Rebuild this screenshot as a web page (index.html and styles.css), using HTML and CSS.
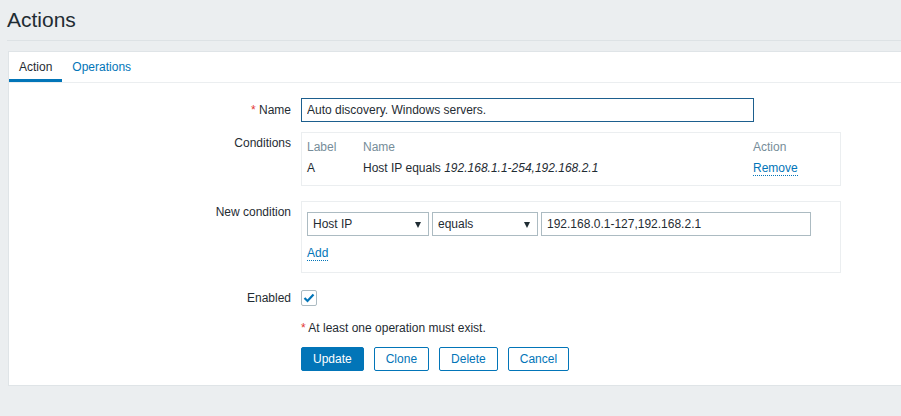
FILE: index.html
```html
<!DOCTYPE html>
<html>
<head>
<meta charset="utf-8">
<link rel="stylesheet" href="styles.css">
</head>
<body>
<header class="page-header"><h1>Actions</h1></header>
<div class="panel">
  <ul class="tabs">
    <li class="tab active">Action</li>
    <li class="tab"><a href="#">Operations</a></li>
  </ul>
  <div class="form">
    <div class="row row-name">
      <label class="lbl"><span class="req">*</span> Name</label>
      <div class="field"><input class="text name-input" value="Auto discovery. Windows servers."></div>
    </div>
    <div class="row row-cond">
      <label class="lbl lbl-top">Conditions</label>
      <div class="field">
        <div class="box cond-box">
          <div class="trow thead"><span class="c1">Label</span><span class="c2">Name</span><span class="c3">Action</span></div>
          <div class="trow"><span class="c1">A</span><span class="c2">Host IP equals <i>192.168.1.1-254,192.168.2.1</i></span><span class="c3"><a class="dlink" href="#">Remove</a></span></div>
        </div>
      </div>
    </div>
    <div class="row row-new">
      <label class="lbl lbl-top">New condition</label>
      <div class="field">
        <div class="box new-box">
          <div class="inputs">
            <div class="select sel1">Host IP<span class="arrow"></span></div>
            <div class="select sel2">equals<span class="arrow"></span></div>
            <input class="text ip-input" value="192.168.0.1-127,192.168.2.1">
          </div>
          <a class="dlink add" href="#">Add</a>
        </div>
      </div>
    </div>
    <div class="row row-enabled">
      <label class="lbl">Enabled</label>
      <div class="field">
        <span class="checkbox"><svg width="12" height="10" viewBox="0 0 12 10"><path d="M1.5 5 L4.5 8 L10.5 1.5" fill="none" stroke="#0275b8" stroke-width="2.2"/></svg></span>
      </div>
    </div>
    <div class="row row-msg">
      <div class="lbl"></div>
      <div class="field msg"><span class="req">*</span> At least one operation must exist.</div>
    </div>
    <div class="row row-buttons">
      <div class="lbl"></div>
      <div class="field buttons">
        <button class="btn primary">Update</button>
        <button class="btn alt">Clone</button>
        <button class="btn alt">Delete</button>
        <button class="btn alt">Cancel</button>
      </div>
    </div>
  </div>
</div>
</body>
</html>
```
FILE: styles.css
```css
* { box-sizing: border-box; }
html, body { margin: 0; padding: 0; }
body {
  background: #ebeef0;
  font-family: "Liberation Sans", Arial, sans-serif;
  font-size: 12px;
  color: #1f2c33;
  width: 901px;
  height: 416px;
  overflow: hidden;
}
.page-header {
  height: 41px;
  border-bottom: 1px solid #dde2e5;
  margin-left: 7px;
  padding-top: 8px;
}
.page-header h1 {
  margin: 0;
  font-size: 21px;
  font-weight: normal;
  line-height: 24px;
  color: #1f2c33;
}
.panel {
  margin: 10px 0 0 8px;
  background: #fff;
  border: 1px solid #dfe4e7;
  border-right: none;
  height: 335px;
}
.tabs {
  list-style: none;
  margin: 0;
  padding: 0;
  display: flex;
  height: 31px;
  border-bottom: 1px solid #ebeef0;
}
.tab {
  padding: 8px 10px 0;
  height: 30px;
  line-height: 14px;
}
.tab.active { border-bottom: 3px solid #0275b8; }
.tab a { color: #0275b8; text-decoration: none; }
.form { padding-top: 15px; }
.row { display: flex; align-items: center; }
.lbl {
  width: 282px;
  flex: none;
  text-align: right;
  padding-right: 0;
}
.lbl-top { align-self: flex-start; padding-top: 4px; }
.field { margin-left: 10px; }
.req { color: #e33734; }
input.text {
  font-family: inherit;
  font-size: 12px;
  color: #1f2c33;
  height: 24px;
  border: 1px solid #acbbc2;
  padding: 0 5px;
  outline: none;
  background: #fff;
}
.name-input { width: 453px; border-color: #1d5f8e !important; padding-left: 4px; }
.row-cond { margin-top: 10px; }
.box {
  border: 1px solid #ebeef0;
  width: 540px;
}
.cond-box { height: 54px; padding: 4px 5px; }
.trow { display: flex; line-height: 21px; height: 21px; }
.thead { color: #768d99; }
.c1 { width: 56px; }
.c2 { width: 390px; }
.dlink {
  color: #0275b8;
  text-decoration: none;
  border-bottom: 1px dotted #0275b8;
}
.row-new { margin-top: 15px; }
.new-box { height: 72px; padding: 10px 5px 0; }
.inputs { display: flex; gap: 3px; }
.select {
  position: relative;
  height: 24px;
  line-height: 22px;
  border: 1px solid #acbbc2;
  padding: 0 5px;
}
.sel1 { width: 122px; }
.sel2 { width: 106px; }
.arrow {
  position: absolute;
  right: 7px;
  top: 9px;
  width: 0; height: 0;
  border-left: 3.5px solid transparent;
  border-right: 3.5px solid transparent;
  border-top: 6px solid #1f2c33;
}
.ip-input { width: 270px; }
.add { display: inline-block; margin-top: 10px; line-height: 14px; }
.row-enabled { margin-top: 17px; }
.checkbox {
  display: flex;
  align-items: center;
  justify-content: center;
  width: 16px; height: 16px;
  border: 1px solid #acbbc2;
  border-radius: 2px;
}
.row-msg { margin-top: 15px; line-height: 14px; }
.row-buttons { margin-top: 12px; }
.buttons { display: flex; }
.btn {
  font-family: inherit;
  font-size: 12px;
  height: 24px;
  padding: 0 11px;
  border-radius: 2px;
  border: 1px solid #0275b8;
  margin-right: 10px;
  cursor: pointer;
}
.btn.primary { background: #0275b8; color: #fff; }
.btn.alt { background: #fff; color: #0275b8; }
```
